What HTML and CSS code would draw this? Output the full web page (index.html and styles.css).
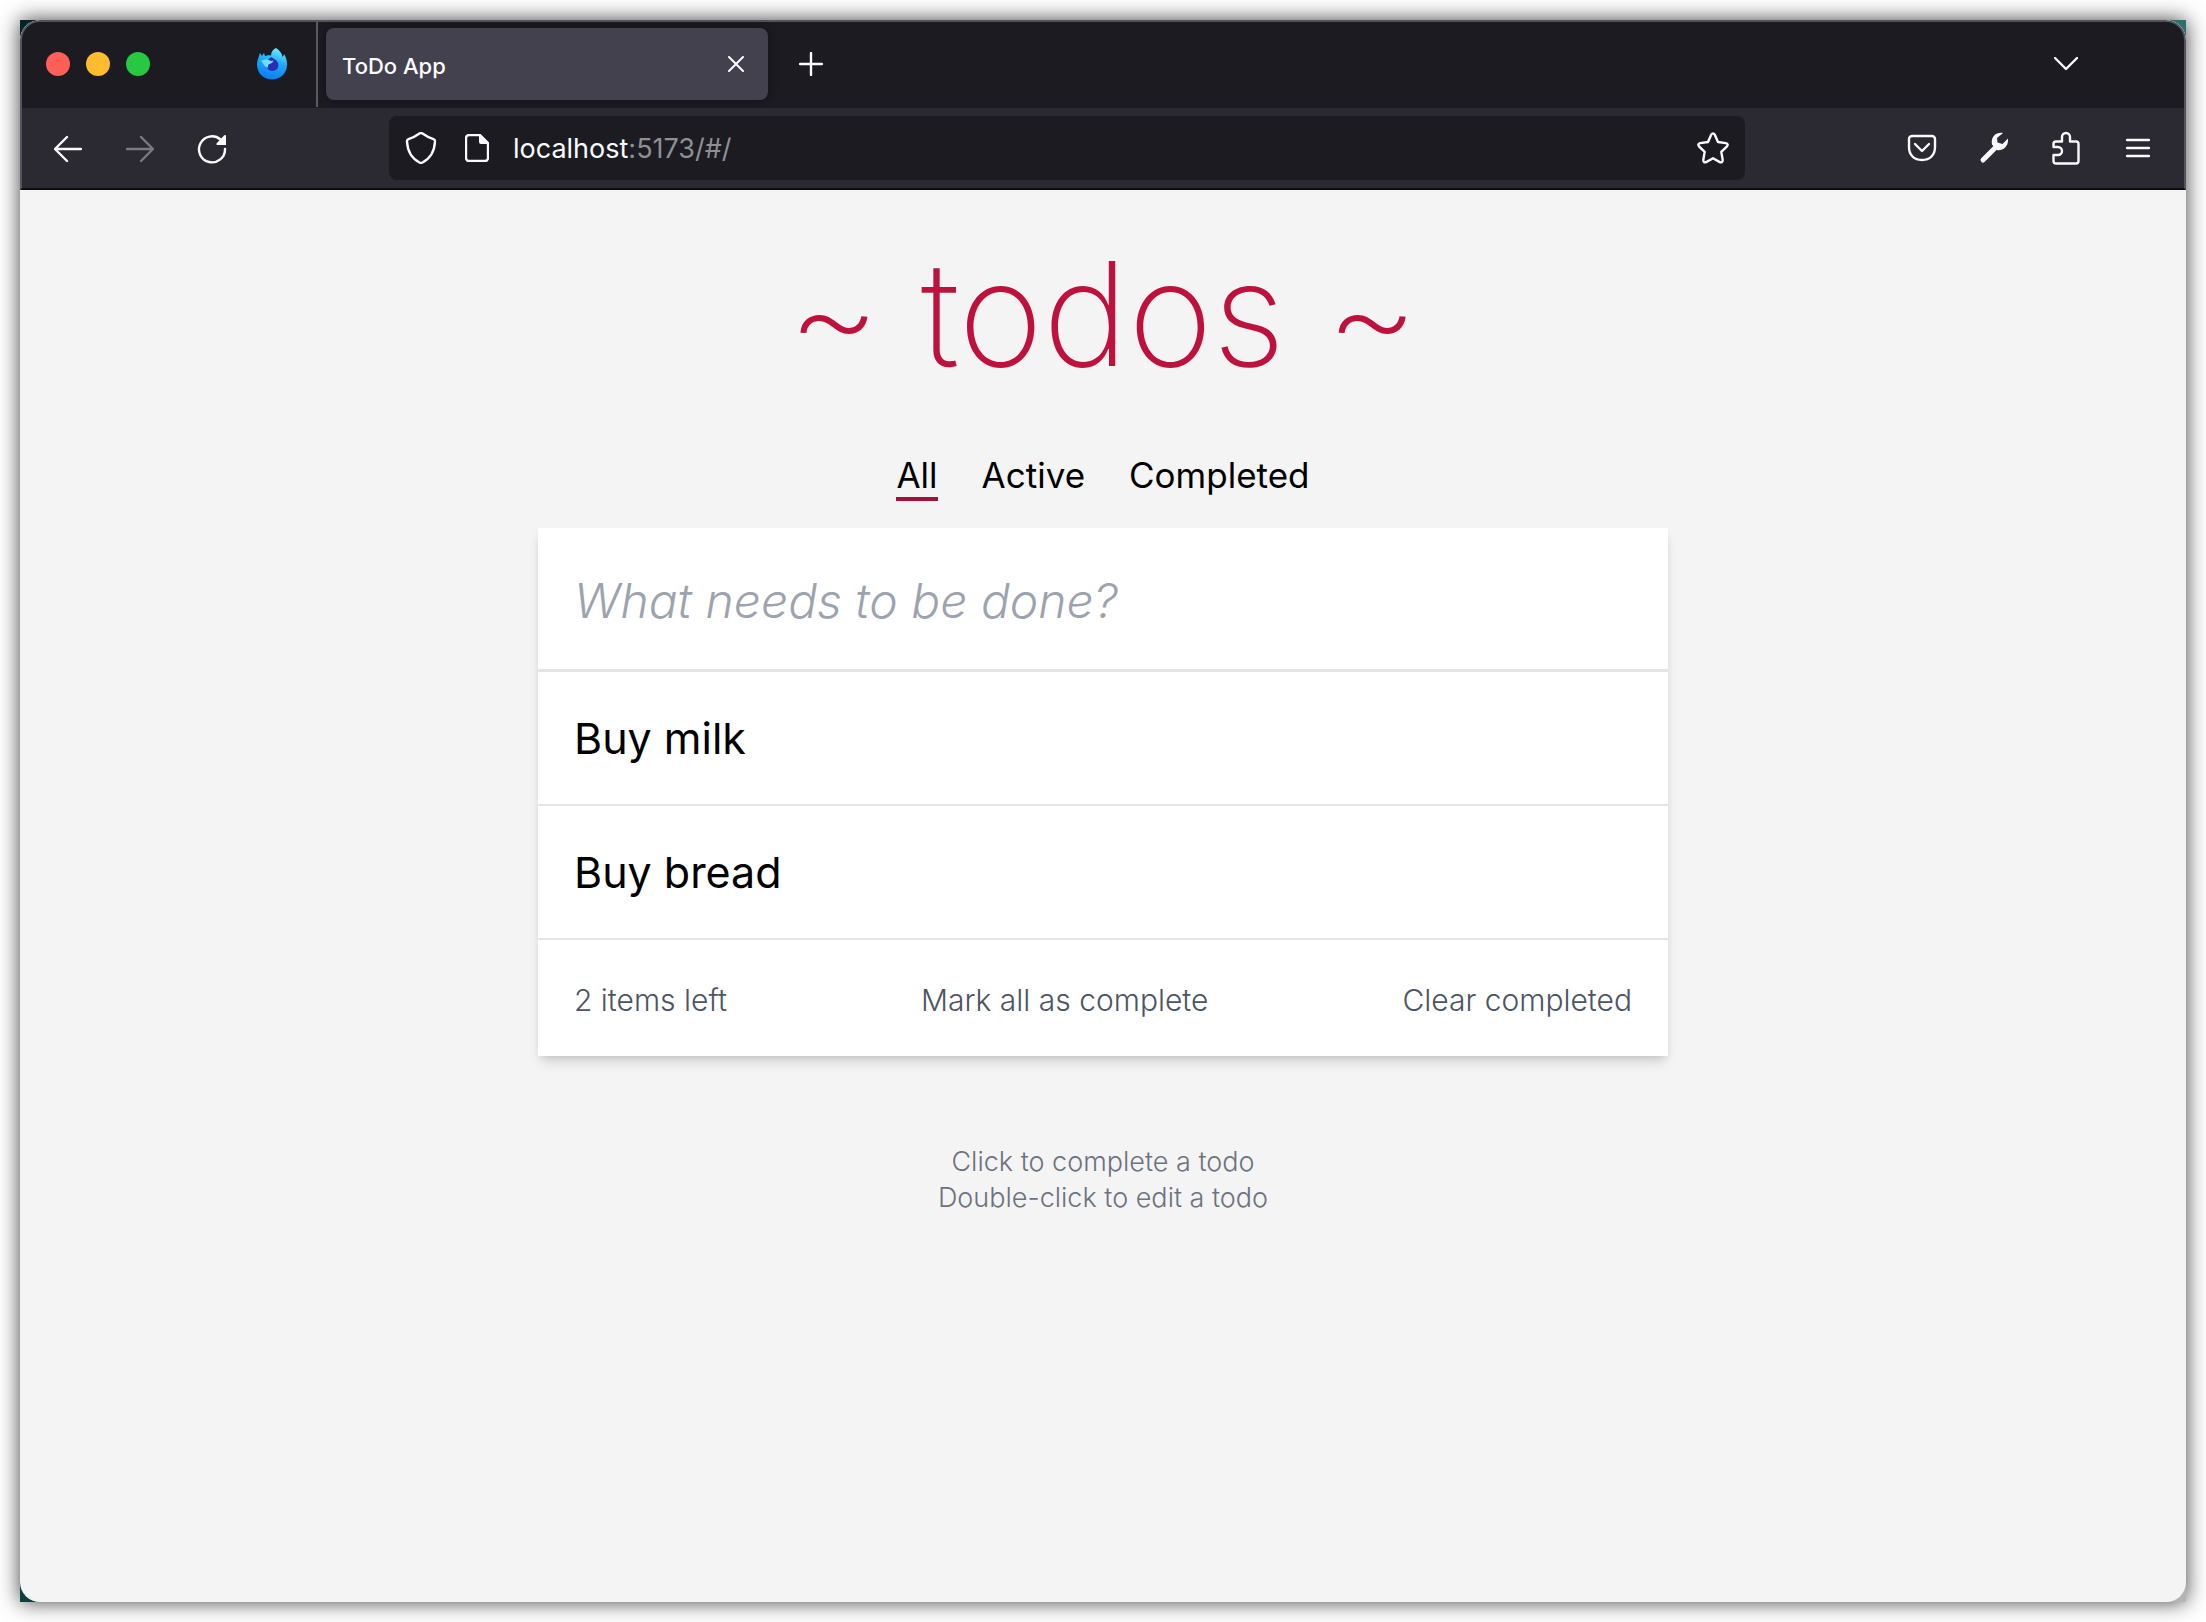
FILE: index.html
```html
<!DOCTYPE html>
<html lang="en">
<head>
<meta charset="utf-8">
<title>ToDo App</title>
<link rel="stylesheet" href="styles.css">
</head>
<body>
<div class="desktop">
  <div class="window">
    <header class="chrome">
      <div class="tab-bar">
        <div class="lights">
          <button class="light light-close" aria-label="Close window"></button>
          <button class="light light-min" aria-label="Minimize window"></button>
          <button class="light light-max" aria-label="Zoom window"></button>
        </div>
        <button class="pinned" aria-label="Firefox View">
          <svg width="32" height="32" viewBox="0 0 32 32">
            <defs>
              <linearGradient id="fx" x1="0.7" y1="0" x2="0.4" y2="1"><stop offset="0" stop-color="#6ff0ff"/><stop offset="0.45" stop-color="#1fa8fb"/><stop offset="1" stop-color="#0a7df0"/></linearGradient>
            </defs>
            <path fill="url(#fx)" d="M20 0c4 3 6 5 6.500 9 1-1 1.500-2 1.500-3 2 3 3 7 3 10.500C31 25 24.500 31.500 16 31.500S1 25 1 16.500C1 12 3 9 4 5l2 3 2-3 1 3c2-1 4-1 6-.5C15 4 17 1.500 20 0z"/>
            <path fill="#2a2fae" d="M10 14c2-2 3-3 5-5 3 2 6 3 7 6 1.500 4-1.500 8-5.500 8-4 0-6.500-3-6.500-9z"/>
            <path fill="#6fdcff" d="M5 13c3-2 6-2 9-.5 1 .5 2 .5 3.500 0-.5 2-2 3-4 3.500-1.500.5-2 2-1 3.500-4 0-5-4-7.500-6.500z"/>
          </svg>
        </button>
        <div class="tab">
          <span class="tab-title">ToDo App</span>
          <button class="icon" aria-label="Close tab"><svg width="16" height="16" viewBox="0 0 16 16"><path class="line" d="M1 1l14 14M15 1L1 15"/></svg></button>
        </div>
        <button class="icon new-tab" aria-label="New tab"><svg width="24" height="24" viewBox="0 0 24 24"><path class="line bold" d="M12 1v22M1 12h22"/></svg></button>
        <button class="icon all-tabs" aria-label="List all tabs"><svg width="24" height="14" viewBox="0 0 24 14"><path class="line bold" d="M1 1l11 11L23 1"/></svg></button>
      </div>
      <div class="nav-bar">
        <div class="history">
          <button class="icon" aria-label="Back"><svg width="28" height="28" viewBox="0 0 28 28"><path class="line bold" d="M27 14H1M13 2L1 14l12 12"/></svg></button>
          <button class="icon muted" aria-label="Forward"><svg width="28" height="28" viewBox="0 0 28 28"><path class="line bold" d="M1 14h26M15 2l12 12-12 12"/></svg></button>
          <button class="icon" aria-label="Reload"><svg width="30" height="30" viewBox="0 0 30 30"><path class="line bold" d="M28 15a13 13 0 1 1-4.500-9.500"/><path class="solid" d="M28 1a1 1 0 0 1 1 1v9H20.500a1 1 0 0 1-.8-1.700L27.300 1.300z"/></svg></button>
        </div>
        <div class="url-bar">
          <svg width="32" height="32" viewBox="0 0 32 32"><path class="line bold" d="M14.500 1.500Q16 .5 17.500 1.500C21 4 25 6 28.500 7.200Q30.200 7.800 30 9.500C29.500 20 25 26.500 17.500 30.500Q16 31.300 14.500 30.500C7 26.500 2.500 20 2 9.500Q1.800 7.800 3.500 7.200C7 6 11 4 14.500 1.500z"/></svg>
          <svg width="24" height="28" viewBox="0 0 24 28"><path class="line bold" d="M4 1h11l8 8v15a3 3 0 0 1-3 3H4a3 3 0 0 1-3-3V4a3 3 0 0 1 3-3z"/><path class="solid" d="M14 1h2l7 7v2h-7a2 2 0 0 1-2-2z"/></svg>
          <span class="address">localhost<span class="port">:5173/#/</span></span>
          <button class="icon star" aria-label="Bookmark this page"><svg width="32" height="32" viewBox="0 0 32 32"><path class="line bold" d="M14.200 2.700Q16 0 17.800 2.700L21 10l7.800 1.100q3 .8 1.200 3.200l-5.700 5.600 1.400 8q.1 3.100-2.900 2.200L16 26.300l-6.800 3.800q-3 .9-2.900-2.200l1.400-8L2 14.300q-1.800-2.400 1.200-3.200L11 10z"/></svg></button>
        </div>
        <div class="tools">
          <button class="icon" aria-label="Save to Pocket"><svg width="30" height="28" viewBox="0 0 30 28"><path class="line bold" d="M5 2h20a3 3 0 0 1 3 3v8c0 8-5 13-13 13S2 21 2 13V5a3 3 0 0 1 3-3z"/><path class="line bold" d="M8 10l7 7 7-7"/></svg></button>
          <button class="icon" aria-label="Developer tools"><svg width="30" height="32" viewBox="0 0 30 32"><path class="handle" d="M4 28L17 15"/><path class="solid" d="M24 1C17 0 11.500 5 13 12.500L17.500 18C23 19.500 29 15 29 8.500V6.500L23.500 12 18.500 10.500 18 6z"/></svg></button>
          <button class="icon" aria-label="Extensions"><svg width="28" height="34" viewBox="0 0 28 34"><path class="line bold" d="M10 10.500V6a4 4 0 0 1 8 0v4.500h6a2.500 2.500 0 0 1 2.500 2.500v17A2.500 2.500 0 0 1 24 32.500H4A2.500 2.500 0 0 1 1.500 30v-6H6a4 4 0 0 0 0-8H1.500v-3A2.500 2.500 0 0 1 4 10.500z"/></svg></button>
          <button class="icon" aria-label="Open menu"><svg width="24" height="20" viewBox="0 0 24 20"><path class="line bold" d="M1 2h22M1 10h22M1 18h22"/></svg></button>
        </div>
      </div>
    </header>
    <main class="page">
      <h1 class="title">~ todos ~</h1>
      <nav class="filters">
        <a class="filter active" href="#/">All</a>
        <a class="filter" href="#/active">Active</a>
        <a class="filter" href="#/completed">Completed</a>
      </nav>
      <section class="card">
        <input class="new-todo" type="text" placeholder="What needs to be done?" aria-label="New todo">
        <ul class="todos">
          <li class="todo">Buy milk</li>
          <li class="todo">Buy bread</li>
        </ul>
        <div class="card-footer">
          <span>2 items left</span>
          <button class="action">Mark all as complete</button>
          <button class="action">Clear completed</button>
        </div>
      </section>
      <footer class="help">
        <p>Click to complete a todo</p>
        <p>Double-click to edit a todo</p>
      </footer>
    </main>
  </div>
</div>
</body>
</html>
```
FILE: styles.css
```css
* { box-sizing: border-box; }

body {
  margin: 0;
  padding: 20px;
  background: #fff;
  font-family: Inter, "Liberation Sans", sans-serif;
}

button {
  padding: 0;
  border: 0;
  background: none;
  color: inherit;
  font: inherit;
}

h1, p, ul { margin: 0; padding: 0; }

/* Wallpaper peeks out behind the rounded window corners. */
.desktop {
  background:
    linear-gradient(#00262b, #00262b) 0 0 / 24px 24px no-repeat,
    linear-gradient(#2b7070, #2b7070) 100% 0 / 24px 24px no-repeat,
    linear-gradient(#0f4040, #0f4040) 0 100% / 24px 24px no-repeat,
    #b4b4b4;
  box-shadow: 0 0 20px rgba(0, 0, 0, 0.75);
}

.window {
  display: flex;
  flex-direction: column;
  min-height: calc(100vh - 40px);
  border-radius: 20px;
  overflow: hidden;
  background: #f4f4f4;
}

.chrome {
  border: 2px solid #55545b;
  border-bottom: 2px solid #0c0c0d;
  border-radius: 20px 20px 0 0;
  background: #1c1b22;
  color: #fbfbfe;
}

.tab-bar {
  display: flex;
  align-items: center;
  height: 86px;
  padding-bottom: 2px;
}

.lights { display: flex; gap: 16px; padding-left: 24px; }
.light { width: 24px; height: 24px; border-radius: 50%; }
.light-close { background: #ff5f57; }
.light-min { background: #febc2e; }
.light-max { background: #28c840; }

.pinned {
  display: flex;
  align-items: center;
  height: 86px;
  margin-left: 106px;
  padding-right: 28px;
  border-right: 2px solid #5b5a60;
}

.tab {
  display: flex;
  align-items: center;
  justify-content: space-between;
  width: 442px;
  height: 72px;
  margin-left: 8px;
  padding: 0 24px 0 16px;
  border-radius: 8px;
  background: #42414d;
  box-shadow: 0 0 8px rgba(0, 0, 0, 0.4);
}

.tab-title { padding-top: 4px; font-size: 22px; font-weight: 500; line-height: 28px; }

.icon { display: flex; align-items: center; justify-content: center; }
.icon svg, .url-bar svg, .pinned svg { display: block; flex: none; }
.line { fill: none; stroke: currentColor; stroke-width: 2; stroke-linecap: round; stroke-linejoin: round; }
.line.bold { stroke-width: 2.4; }
.handle { fill: none; stroke: currentColor; stroke-width: 5; stroke-linecap: round; }
.solid { fill: currentColor; }
.muted { color: #7b7a80; }

.new-tab { margin-left: 31px; }
.all-tabs { margin-left: auto; margin-right: 106px; }

.nav-bar {
  display: flex;
  align-items: center;
  justify-content: space-between;
  height: 80px;
  padding: 0 10px;
  background: #2b2a33;
}

.history { display: flex; width: 357px; padding-top: 2px; }
.history .icon { width: 72px; height: 64px; }

.url-bar {
  display: flex;
  flex: 1;
  align-items: center;
  gap: 28px;
  height: 64px;
  padding: 0 16px;
  border-radius: 8px;
  background: #1c1b22;
}

.address { margin-left: -4px; padding-top: 2px; font-size: 27px; line-height: 32px; }
.port { color: #8f8f94; }
.star { margin-left: auto; }

.tools { display: flex; justify-content: flex-end; width: 429px; }
.tools .icon { width: 72px; height: 64px; }

.page {
  display: flex;
  flex: 1;
  flex-direction: column;
  align-items: center;
  padding: 44px 24px 0;
}

.title {
  color: #be123c;
  font-size: 144px;
  font-weight: 200;
  line-height: 160px;
}

.filters { display: flex; gap: 44px; margin-top: 59px; }

.filter {
  border-bottom: 4px solid transparent;
  color: #000;
  font-size: 35px;
  line-height: 44px;
  text-decoration: none;
}

.filter.active { border-color: #9f1239; }

.card {
  width: 100%;
  max-width: 1130px;
  margin-top: 27px;
  background: #fff;
  box-shadow: 0 8px 12px -2px rgba(0, 0, 0, 0.12), 0 4px 8px -4px rgba(0, 0, 0, 0.15);
}

.new-todo {
  display: block;
  width: 100%;
  height: 144px;
  padding: 4px 36px 0;
  border: 0;
  border-bottom: 3px solid #e5e5e5;
  background: none;
  font: italic 300 48px Inter, "Liberation Sans", sans-serif;
}

.new-todo::placeholder { color: #9ca3af; opacity: 1; }

.todos { list-style: none; }

.todo {
  padding: 38px 36px;
  border-bottom: 2px solid #e5e5e5;
  font-size: 43px;
  line-height: 56px;
}

.card-footer {
  display: flex;
  justify-content: space-between;
  padding: 40px 36px 36px;
  color: #4b5563;
  font-size: 30px;
  font-weight: 300;
  line-height: 40px;
}

.help {
  margin-top: 88px;
  color: #6b7280;
  font-size: 27px;
  font-weight: 300;
  line-height: 36px;
  text-align: center;
}
```
